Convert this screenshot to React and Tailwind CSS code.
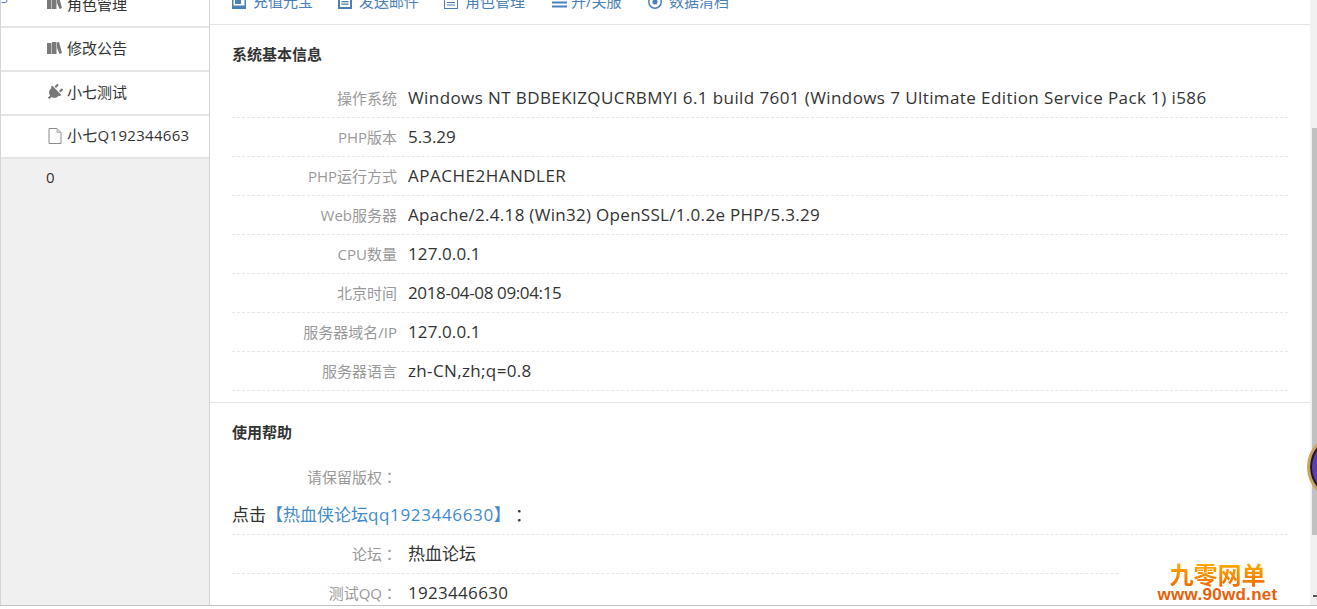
import React from "react";
import { FaPlug } from "react-icons/fa";

const font = { fontFamily: '"Open Sans","Noto Sans CJK SC",sans-serif' };

function Books() {
  return (
    <svg width="15" height="12" viewBox="0 0 15 12" fill="#7a7a7a">
      <path d="M0 1h4.500v11H0z" />
      <path d="M5 0h4.500v12H5z" />
      <path d="M10 0.500 L12 0 L15 11 L12.500 12 L10 6 Z" />
    </svg>
  );
}

function FileIcon() {
  return (
    <svg width="14" height="16" viewBox="0 0 14 16" fill="none" stroke="#8a8a8a" strokeWidth="1">
      <path d="M1 .5H9L13 4.500V15.500H1Z" />
      <path d="M9 .5V4.500H13" fill="#ccc" stroke="#bbb" />
    </svg>
  );
}

function Colon() {
  return <span className="font-['Noto_Sans_CJK_TC']">：</span>;
}

function SideItem({ icon, label, className = "", textClass = "" }) {
  return (
    <div className={`flex items-center gap-[6px] pl-[46px] border-b-2 border-[#e5e5e5] text-[15px] text-[#333] ${className}`}>
      <span className="flex w-[15px] justify-center">{icon}</span>
      <span className={`-ml-[1px] -mt-[2px] ${textClass}`}>{label}</span>
    </div>
  );
}

function ToolItem({ icon, label, textClass = "" }) {
  return (
    <div className="flex items-center gap-[7px] text-[15px] text-[#4a80b8]">
      <span className="flex w-[14px] justify-center">{icon}</span>
      <span className={textClass}>{label}</span>
    </div>
  );
}

function Row({ label, value, valueClass = "" }) {
  return (
    <div className="flex h-[39px] items-center gap-[11px] border-b border-dashed border-[#e6e6e6]">
      <div className="w-[165px] text-right text-[15px] text-[#999]">{label}</div>
      <div className={`text-[17px] text-[#333] whitespace-nowrap ${valueClass}`}>{value}</div>
    </div>
  );
}

const rows = [
  ["操作系统", "Windows NT BDBEKIZQUCRBMYI 6.1 build 7601 (Windows 7 Ultimate Edition Service Pack 1) i586", "tracking-[0.41px]"],
  ["PHP版本", "5.3.29", ""],
  ["PHP运行方式", "APACHE2HANDLER", "tracking-[0.5px]"],
  ["Web服务器", "Apache/2.4.18 (Win32) OpenSSL/1.0.2e PHP/5.3.29", "tracking-[0.3px]"],
  ["CPU数量", "127.0.0.1", "tracking-[0.1px]"],
  ["北京时间", "2018-04-08 09:04:15", "tracking-[-0.37px]"],
  ["服务器域名/IP", "127.0.0.1", "tracking-[0.1px]"],
  ["服务器语言", "zh-CN,zh;q=0.8", "tracking-[0.36px]"],
];

export default function App() {
  return (
    <div className="relative h-[609px] w-[1317px] overflow-hidden bg-white" style={font}>
      <div className="flex h-[606px] border-b border-[#c4c4c4]">
        {/* sidebar */}
        <aside className="flex h-full w-[210px] shrink-0 flex-col border-l border-r border-[#d4d4d4] bg-[#f0f0f0]">
          <div className="bg-white">
            <SideItem className="-mt-[16px] h-[44px]" icon={<span className="-mt-[4px]"><Books /></span>} label="角色管理" />
            <SideItem className="h-[44px]" icon={<span className="-mt-[2px]"><Books /></span>} label="修改公告" />
            <SideItem className="h-[44px]" icon={<FaPlug className="-mt-[2px] rotate-45 text-[17px] text-[#777]" />} label="小七测试" />
            <SideItem className="h-[43px]" textClass="tracking-[0.3px]" icon={<span className="-mt-[2px]"><FileIcon /></span>} label="小七Q192344663" />
          </div>
          <div className="pl-[45px] pt-[7px] text-[15px] text-[#333]">0</div>
        </aside>

        {/* main */}
        <main className="min-w-0 flex-1 overflow-hidden">
          <div className="-mt-[21px] flex h-[46px] items-center gap-[25px] border-b border-[#e5e5e5] pl-[22px]">
            <ToolItem label="充值元宝" icon={
              <svg width="14" height="14" viewBox="0 0 14 14" fill="#4a80b8"><path d="M0 0h14v14H0z M1.500 1.500v9h11v-9z" fillRule="evenodd" /><rect x="3" y="2" width="6" height="7" /></svg>
            } />
            <ToolItem label="发送邮件" icon={
              <svg width="14" height="14" viewBox="0 0 14 14" fill="#4a80b8"><path d="M0 0h14v14H0z M2 1v11h10V1z" fillRule="evenodd" /><rect x="3.500" y="6" width="7" height="1.300" /><rect x="3.500" y="8.500" width="7" height="1.300" /></svg>
            } />
            <ToolItem label="角色管理" textClass="min-w-[62px]" icon={
              <svg width="14" height="14" viewBox="0 0 14 14" fill="none" stroke="#4a80b8"><rect x="0.500" y="0.500" width="13" height="13" /><path d="M3 7.500h8M3 10h8" /></svg>
            } />
            <ToolItem label="开/关服" textClass="-ml-[2px] min-w-[52px]" icon={
              <svg className="shrink-0" width="15" height="14" viewBox="0 0 15 14" fill="#4a80b8"><rect y="3" width="15" height="2" /><rect y="6.500" width="15" height="2" /><rect y="10.500" width="15" height="2" /></svg>
            } />
            <ToolItem label="数据清档" icon={
              <svg width="14" height="14" viewBox="0 0 14 14"><circle cx="7" cy="7" r="6.200" fill="none" stroke="#4a80b8" strokeWidth="1.500" /><circle cx="7" cy="7" r="2.500" fill="#4a80b8" /></svg>
            } />
          </div>

          <section className="border-b border-[#e5e5e5] px-[22px] pb-[11px] pt-[19px]">
            <h2 className="mb-[15px] h-[20px] text-[15px] font-bold leading-[20px] text-[#333]">系统基本信息</h2>
            <div>
              {rows.map(([l, v, c]) => (
                <Row key={l} label={l} value={v} valueClass={c} />
              ))}
            </div>
          </section>

          <section className="px-[22px] pt-[19px]">
            <h2 className="mb-[17px] h-[20px] text-[15px] font-bold leading-[20px] text-[#333]">使用帮助</h2>
            <div className="flex h-[37px] items-center gap-[11px]">
              <div className="w-[165px] text-right text-[15px] text-[#999]">请保留版权<Colon /></div>
            </div>
            <div className="flex h-[39px] items-center border-b border-dashed border-[#e6e6e6] text-[17px] text-[#333]">
              点击<span className="text-[#428bca]">【热血侠论坛<span className="tracking-[0.65px]">qq1923446630</span>】</span><Colon />
            </div>
            <Row label={<>论坛<Colon /></>} value="热血论坛" />
            <Row label={<>测试QQ<Colon /></>} value="1923446630" valueClass="tracking-[0.3px]" />
          </section>
        </main>

        {/* scrollbar */}
        <div className="flex h-full w-[7px] shrink-0 flex-col items-end bg-[#f1f1f1]">
          <div className="mt-[128px] h-[407px] w-[5px] bg-[#c1c1c1]" />
          <div className="mt-auto mb-[8px] h-[2px] w-[4px] bg-[#555]" />
        </div>
      </div>

      {/* overlays */}
      <svg className="absolute left-[1px] top-0" width="7" height="4" viewBox="0 0 7 4" fill="none" stroke="#4a80b8"><path d="M0.500 2.500 H4 Q6 2.500 6 0" /></svg>
      <div className="absolute right-0 top-[433px] h-[68px] w-[10px] overflow-hidden">
        <div className="h-[68px] w-[68px] rounded-full border-[3px] border-[#c9a45a] bg-[#5a3fb0] shadow-[inset_0_0_0_2px_#1c1c1c]" />
      </div>
      <div className="absolute left-[1121px] top-[561px] flex h-[44px] w-[189px] flex-col items-center rounded-[4px] bg-white pl-[4px]">
        <div className="bg-gradient-to-b from-[#ffb000] to-[#ef6a00] bg-clip-text text-[24px] font-bold leading-[26px] text-transparent font-['Noto_Sans_CJK_SC']">九零网单</div>
        <div className="-mt-[1px] text-[17px] font-bold leading-[17px] tracking-[0.3px] text-[#ea5f08] font-['Liberation_Sans']">www.90wd.net</div>
      </div>
    </div>
  );
}
